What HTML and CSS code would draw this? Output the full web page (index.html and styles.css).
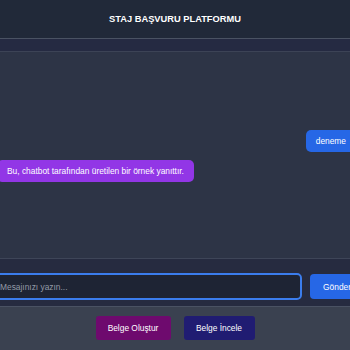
FILE: index.html
```html
<!DOCTYPE html>
<html lang="tr">
<head>
    <meta charset="UTF-8">
    <meta name="viewport" content="width=device-width, initial-scale=1.0">
    <title>Staj Başvuru Platformu</title>
    <link rel="stylesheet" href="styles.css">
</head>
<body>
    <div class="app">
        <header class="header">
            <h1>STAJ BAŞVURU PLATFORMU</h1>
        </header>
        <div class="subbar"></div>

        <main class="chat">
            <div class="msg msg-user">deneme</div>
            <div class="msg msg-bot">Bu, chatbot tarafından üretilen bir örnek yanıttır.</div>
        </main>

        <div class="input-row">
            <input class="msg-input" type="text" placeholder="Mesajınızı yazın...">
            <button class="btn-send">Gönder</button>
        </div>

        <div class="actions">
            <button class="btn btn-create">Belge Oluştur</button>
            <button class="btn btn-review">Belge İncele</button>
        </div>
    </div>
</body>
</html>
```

FILE: styles.css
```css
body {
    margin: 0;
    height: 350px;
    overflow: hidden;
    background: #3a4150;
    font-family: "Liberation Sans", Arial, sans-serif;
    color: white;
}
.app {
    width: 400px;
    margin-left: -25px;
    height: 350px;
    display: flex;
    flex-direction: column;
}
.header {
    height: 38px;
    flex-shrink: 0;
    background: #212939;
    border-bottom: 1px solid #4a5263;
    display: flex;
    align-items: center;
    justify-content: center;
}
.header h1 {
    margin: 0;
    font-size: 9.3px;
    font-weight: bold;
}
.subbar {
    height: 12px;
    flex-shrink: 0;
    background: #252a42;
    border-bottom: 1px solid #3c4356;
}
.chat {
    flex: 1;
    background: #2d3446;
    padding: 78px 19px 0 22px;
    display: flex;
    flex-direction: column;
    gap: 8px;
    border-bottom: 1px solid #3e4558;
}
.msg {
    font-size: 8.4px;
    line-height: 22px;
    padding: 0 10px;
    border-radius: 5px;
    max-width: 70%;
}
.msg-user {
    align-self: flex-end;
    background: #2667e6;
}
.msg-bot {
    align-self: flex-start;
    background: #9236e6;
}
.input-row {
    height: 48px;
    flex-shrink: 0;
    box-sizing: border-box;
    background: #262b40;
    padding: 14px 11px 7px 14px;
    display: flex;
    gap: 8px;
    border-bottom: 1px solid #4a5263;
}
.msg-input {
    flex: 1;
    height: 27px;
    box-sizing: border-box;
    background: #1e2434;
    border: 2px solid #3b7ded;
    border-radius: 5px;
    padding: 0 9px;
    color: white;
    font-family: inherit;
    font-size: 8.4px;
    outline: none;
}
.msg-input::placeholder {
    color: #939aa6;
}
.btn-send {
    height: 25px;
    margin-top: 1px;
    background: #2667e6;
    color: white;
    border: none;
    border-radius: 4px;
    padding: 0 13px;
    font-family: inherit;
    font-size: 8.4px;
}
.actions {
    height: 43px;
    flex-shrink: 0;
    box-sizing: border-box;
    display: flex;
    justify-content: center;
    align-items: flex-start;
    gap: 13px;
    padding-top: 9px;
}
.btn {
    height: 24px;
    border: none;
    border-radius: 3px;
    color: white;
    font-family: inherit;
    font-size: 8.4px;
    padding: 0 12px;
}
.btn-create {
    background: #6e0a6e;
    width: 75px;
}
.btn-review {
    background: #201c72;
    width: 71px;
}
```
